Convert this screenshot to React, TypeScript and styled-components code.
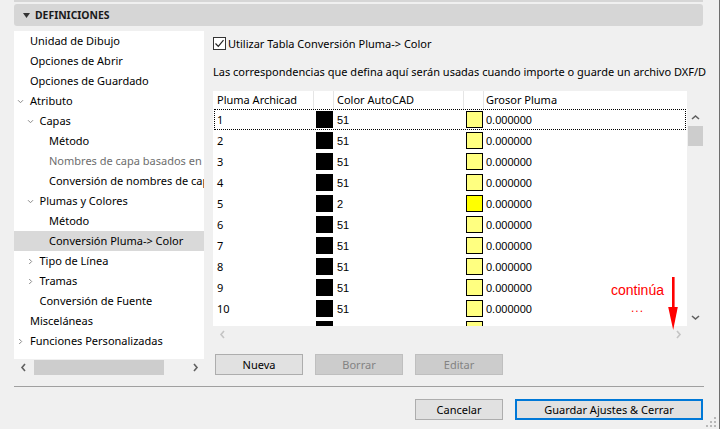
import React from "react";
import styled, { createGlobalStyle, css } from "styled-components";

const Global = createGlobalStyle`
  html, body { margin: 0; padding: 0; background: #f0f0f0; }
  body { font-family: "Noto Sans", "Open Sans", sans-serif; font-size: 11px; color: #000; }
  * { box-sizing: border-box; }
`;

const Page = styled.div`
  position: relative;
  width: 720px;
  height: 429px;
  overflow: hidden;
  background: #f0f0f0;
  border-right: 1px solid #6e6e6e;
  padding-left: 14px;
  display: flex;
  flex-direction: column;
`;

const TopStrip = styled.div`
  width: 689px;
  height: 2px;
  background: #d6d6d6;
`;

const SectionHeader = styled.div`
  margin-top: 2px;
  width: 689px;
  height: 22px;
  background: #d6d6d6;
  border-radius: 3px;
  display: flex;
  align-items: center;
  gap: 5px;
  padding-left: 9px;
  font-weight: 700;
  font-size: 10.4px;
  color: #1a1a1a;
`;

const Body = styled.div`
  margin-top: 5px;
  display: flex;
  gap: 9px;
  height: 344px;
`;

const LeftCol = styled.div`
  width: 190px;
  display: flex;
  flex-direction: column;
`;

const TreePanel = styled.div`
  height: 328px;
  background: #fff;
  overflow: hidden;
  white-space: nowrap;
`;

const TreeRow = styled.div<{ $level: number; $selected?: boolean; $dim?: boolean }>`
  height: 20px;
  line-height: 20px;
  display: flex;
  align-items: center;
  overflow: hidden;
  padding-left: ${(p) => 3 + p.$level * 9.5}px;
  color: ${(p) => (p.$dim ? "#6d6d6d" : "#000")};
  background: ${(p) => (p.$selected ? "#d9d9d9" : "transparent")};
`;

const ChevSlot = styled.span`
  width: 13px;
  flex: none;
  display: flex;
  align-items: center;
`;

const HScroll = styled.div`
  height: 16px;
  display: flex;
  align-items: center;
  padding: 0 5px 0 6px;
`;

const Thumb = styled.div<{ $w: number }>`
  height: 15px;
  background: #cdcdcd;
  margin-left: 7px;
  width: ${(p) => p.$w}px;
`;

const Spacer = styled.div`
  flex: 1;
`;

const RightCol = styled.div`
  width: 491px;
  display: flex;
  flex-direction: column;
`;

const CheckRow = styled.label`
  height: 24px;
  display: flex;
  align-items: center;
  gap: 2px;
`;

const CheckBox = styled.span`
  width: 13px;
  height: 13px;
  border: 1px solid #333;
  background: #fff;
  display: flex;
  align-items: center;
  justify-content: center;
`;

const Description = styled.div`
  margin-top: 7px;
  height: 20px;
  line-height: 20px;
  width: 493px;
  white-space: nowrap;
  overflow: hidden;
`;

const TableArea = styled.div`
  position: relative;
  margin-top: 9px;
  display: grid;
  grid-template-columns: 474px 17px;
  grid-template-rows: 235px 16px;
`;

const ListView = styled.div`
  background: #fff;
  overflow: hidden;
`;

const gridCols = css`
  display: grid;
  grid-template-columns: 100px 20px 130px 20px 1fr;
`;

const HeaderRow = styled.div`
  ${gridCols};
  height: 18px;
  line-height: 18px;
`;

const HeaderCell = styled.div<{ $pad: number; $sep?: boolean }>`
  padding-left: ${(p) => p.$pad}px;
  border-left: ${(p) => (p.$sep ? "1px solid #e5e5e5" : "none")};
  white-space: nowrap;
`;

const DataRow = styled.div<{ $focus?: boolean }>`
  ${gridCols};
  position: relative;
  height: 21px;
  align-items: center;
  font-family: "Liberation Sans", Arial, sans-serif;
  font-size: 11px;
  color: #000;
  ${(p) =>
    p.$focus &&
    css`
      &::after {
        content: "";
        position: absolute;
        left: 1px;
        right: 1px;
        top: 0;
        bottom: 0;
        border: 1px dotted #000;
      }
    `}
`;

const NumCell = styled.div`
  padding-left: 4px;
  font-family: "Noto Sans", sans-serif;
  font-size: 11px;
`;

const TextCell = styled.div<{ $pad: number }>`
  padding-left: ${(p) => p.$pad}px;
`;

const Swatch = styled.div<{ $fill: string; $border?: boolean }>`
  width: 17px;
  height: 17px;
  margin-left: 3px;
  background: ${(p) => p.$fill};
  border: ${(p) => (p.$border ? "1px solid #000" : "none")};
`;

const VScroll = styled.div`
  grid-row: 1 / 2;
  grid-column: 2 / 3;
  padding-top: 18px;
  display: flex;
  flex-direction: column;
  align-items: center;
`;

const ScrollBtn = styled.div`
  height: 17px;
  width: 17px;
  display: flex;
  align-items: center;
  justify-content: center;
`;

const VThumb = styled.div`
  width: 15px;
  height: 20px;
  background: #cdcdcd;
`;

const TableHScroll = styled.div`
  display: flex;
  align-items: center;
  justify-content: space-between;
  padding: 0 5px 0 6px;
`;

const Note = styled.div`
  position: absolute;
  left: 396px;
  top: 190px;
  color: #f00;
  font-family: "Liberation Sans", Arial, sans-serif;
  font-size: 14px;
  line-height: 18px;
  text-align: center;
  width: 57px;
`;

const Dots = styled.div`
  margin-top: 4px;
  font-size: 12px;
  line-height: 10px;
  letter-spacing: 1px;
`;

const ArrowOverlay = styled.svg`
  position: absolute;
  left: 454px;
  top: 186px;
`;

const ButtonRow = styled.div`
  margin-top: 12px;
  padding-left: 2px;
  display: flex;
  gap: 12px;
`;

const Button = styled.button<{ $w?: number; $default?: boolean }>`
  width: ${(p) => p.$w ?? 88}px;
  height: 21px;
  padding: 0;
  font-family: "Noto Sans", sans-serif;
  font-size: 11px;
  color: #000;
  background: #e1e1e1;
  border: ${(p) => (p.$default ? "2px solid #0078d7" : "1px solid #adadad")};
  &:disabled {
    background: #cccccc;
    border-color: #bfbfbf;
    color: #838383;
  }
`;

const Separator = styled.div`
  margin-top: 11px;
  width: 690px;
  height: 1px;
  background: #a0a0a0;
`;

const Footer = styled.div`
  margin-top: 12px;
  width: 689px;
  display: flex;
  justify-content: flex-end;
  gap: 12px;
`;

const Grip = styled.svg`
  position: absolute;
  right: 2px;
  bottom: 1px;
`;

const ChevronDown = ({ color = "#8a8a8a" }: { color?: string }) => (
  <svg width="7" height="7" viewBox="0 0 7 7">
    <path d="M1 2.2 L3.5 4.7 L6 2.2" fill="none" stroke={color} strokeWidth="1" />
  </svg>
);
const ChevronRight = ({ color = "#8a8a8a" }: { color?: string }) => (
  <svg width="7" height="7" viewBox="0 0 7 7">
    <path d="M2.2 1 L4.7 3.5 L2.2 6" fill="none" stroke={color} strokeWidth="1" />
  </svg>
);

const ArrowIcon = ({ dir, color }: { dir: "l" | "r" | "u" | "d"; color: string }) => {
  const d = {
    l: "M5 1 L2 4.5 L5 8",
    r: "M2 1 L5 4.5 L2 8",
    u: "M1 5 L4.5 2 L8 5",
    d: "M1 2 L4.5 5 L8 2",
  }[dir];
  const horiz = dir === "l" || dir === "r";
  return (
    <svg width={horiz ? 7 : 9} height={horiz ? 9 : 7} viewBox={horiz ? "0 0 7 9" : "0 0 9 7"}>
      <path d={d} fill="none" stroke={color} strokeWidth="1.6" />
    </svg>
  );
};

type Node = { label: string; level: number; chev?: "down" | "right"; dim?: boolean; selected?: boolean };

const tree: Node[] = [
  { label: "Unidad de Dibujo", level: 0 },
  { label: "Opciones de Abrir", level: 0 },
  { label: "Opciones de Guardado", level: 0 },
  { label: "Atributo", level: 0, chev: "down" },
  { label: "Capas", level: 1, chev: "down" },
  { label: "Método", level: 2 },
  { label: "Nombres de capa basados en plumas", level: 2, dim: true },
  { label: "Conversión de nombres de capas", level: 2 },
  { label: "Plumas y Colores", level: 1, chev: "down" },
  { label: "Método", level: 2 },
  { label: "Conversión Pluma-> Color", level: 2, selected: true },
  { label: "Tipo de Línea", level: 1, chev: "right" },
  { label: "Tramas", level: 1, chev: "right" },
  { label: "Conversión de Fuente", level: 1 },
  { label: "Misceláneas", level: 0 },
  { label: "Funciones Personalizadas", level: 0, chev: "right" },
];

const rows = Array.from({ length: 11 }, (_, i) => ({
  pen: i + 1,
  color: i === 4 ? 2 : 51,
  fill: i === 4 ? "#ffff00" : "#ffff80",
}));

export default function App() {
  return (
    <>
      <Global />
      <Page>
        <TopStrip />
        <SectionHeader>
          <svg width="7" height="5" viewBox="0 0 7 5">
            <path d="M0 0 H7 L3.5 5 Z" fill="#333" />
          </svg>
          DEFINICIONES
        </SectionHeader>
        <Body>
          <LeftCol>
            <TreePanel>
              {tree.map((n, i) => (
                <TreeRow key={i} $level={n.level} $dim={n.dim} $selected={n.selected}>
                  <ChevSlot>
                    {n.chev === "down" && <ChevronDown />}
                    {n.chev === "right" && <ChevronRight />}
                  </ChevSlot>
                  {n.label}
                </TreeRow>
              ))}
            </TreePanel>
            <HScroll>
              <ArrowIcon dir="l" color="#606060" />
              <Thumb $w={130} />
              <Spacer />
              <ArrowIcon dir="r" color="#606060" />
            </HScroll>
          </LeftCol>
          <RightCol>
            <CheckRow>
              <CheckBox>
                <svg width="11" height="11" viewBox="0 0 11 11">
                  <path d="M1.5 5.5 L4.3 8.3 L9.5 2.2" fill="none" stroke="#222" strokeWidth="1.2" />
                </svg>
              </CheckBox>
              Utilizar Tabla Conversión Pluma-&gt; Color
            </CheckRow>
            <Description>
              Las correspondencias que defina aquí serán usadas cuando importe o guarde un archivo DXF/DWG.
            </Description>
            <TableArea>
              <ListView>
                <HeaderRow>
                  <HeaderCell $pad={4}>Pluma Archicad</HeaderCell>
                  <HeaderCell $pad={0} $sep />
                  <HeaderCell $pad={3} $sep>Color AutoCAD</HeaderCell>
                  <HeaderCell $pad={0} $sep />
                  <HeaderCell $pad={2} $sep>Grosor Pluma</HeaderCell>
                </HeaderRow>
                {rows.map((r, i) => (
                  <DataRow key={r.pen} $focus={i === 0}>
                    <NumCell>{r.pen}</NumCell>
                    <Swatch $fill="#000" />
                    <TextCell $pad={4}>{r.color}</TextCell>
                    <Swatch $fill={r.fill} $border />
                    <TextCell $pad={3}>0.000000</TextCell>
                  </DataRow>
                ))}
              </ListView>
              <VScroll>
                <ScrollBtn>
                  <ArrowIcon dir="u" color="#606060" />
                </ScrollBtn>
                <VThumb />
                <Spacer />
                <ScrollBtn>
                  <ArrowIcon dir="d" color="#606060" />
                </ScrollBtn>
              </VScroll>
              <TableHScroll>
                <ArrowIcon dir="l" color="#c4c4c4" />
                <ArrowIcon dir="r" color="#c4c4c4" />
              </TableHScroll>
              <Note>
                continúa
                <Dots>...</Dots>
              </Note>
              <ArrowOverlay width="12" height="54" viewBox="0 0 12 54">
                <rect x="5" y="0" width="2.6" height="38" fill="#f00" />
                <path d="M1.2 30 H10.8 L6.2 53 Z" fill="#f00" />
              </ArrowOverlay>
            </TableArea>
            <ButtonRow>
              <Button>Nueva</Button>
              <Button disabled>Borrar</Button>
              <Button disabled>Editar</Button>
            </ButtonRow>
          </RightCol>
        </Body>
        <Separator />
        <Footer>
          <Button>Cancelar</Button>
          <Button $w={188} $default>
            Guardar Ajustes &amp; Cerrar
          </Button>
        </Footer>
        <Grip width="12" height="12" viewBox="0 0 12 12">
          {[
            [9, 1],
            [9, 5],
            [5, 5],
            [9, 9],
            [5, 9],
            [1, 9],
          ].map(([x, y], i) => (
            <rect key={i} x={x} y={y} width="2" height="2" fill="#b8b8b8" />
          ))}
        </Grip>
      </Page>
    </>
  );
}
